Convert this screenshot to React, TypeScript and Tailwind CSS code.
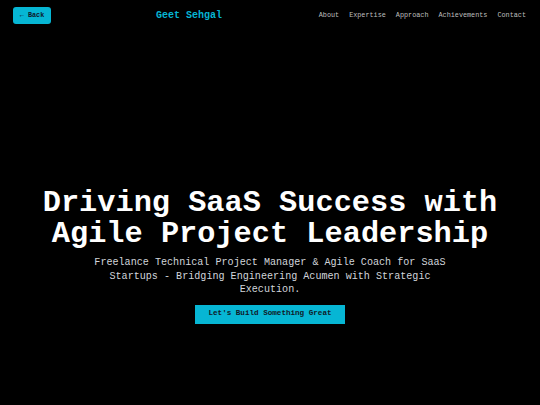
export default function App() {
	return (
		<div className="h-[405px] w-full bg-black font-['Courier_New','Liberation_Mono',monospace] text-white">
			<header className="flex h-[31px] items-center pl-[13px] pr-[14px]">
				<button className="flex h-[17px] w-[38px] items-center justify-center rounded-[3px] bg-[#06b6d4] text-[6.8px] font-bold text-[#0f172a]">
					← Back
				</button>
				<div className="ml-[105px] text-[10px] font-bold text-[#06b6d4]">Geet Sehgal</div>
				<nav className="ml-auto flex gap-[10px] text-[6.8px] text-[#bfbfbf]">
					<span>About</span>
					<span>Expertise</span>
					<span>Approach</span>
					<span>Achievements</span>
					<span>Contact</span>
				</nav>
			</header>
			<section className="flex flex-col items-center pt-[157px] text-center">
				<h1 className="text-[30.3px] font-bold leading-[31px]">
					Driving SaaS Success with
					<br />
					Agile Project Leadership
				</h1>
				<p className="mt-[6px] max-w-[370px] text-[10.1px] leading-[13.5px] text-[#d1d5db]">
					Freelance Technical Project Manager &amp; Agile Coach for SaaS Startups - Bridging Engineering Acumen with Strategic Execution.
				</p>
				<button className="mt-[8px] h-[19px] w-[150px] bg-[#06b6d4] text-[7.6px] font-bold text-[#111827]">
					Let's Build Something Great
				</button>
			</section>
		</div>
	);
}
